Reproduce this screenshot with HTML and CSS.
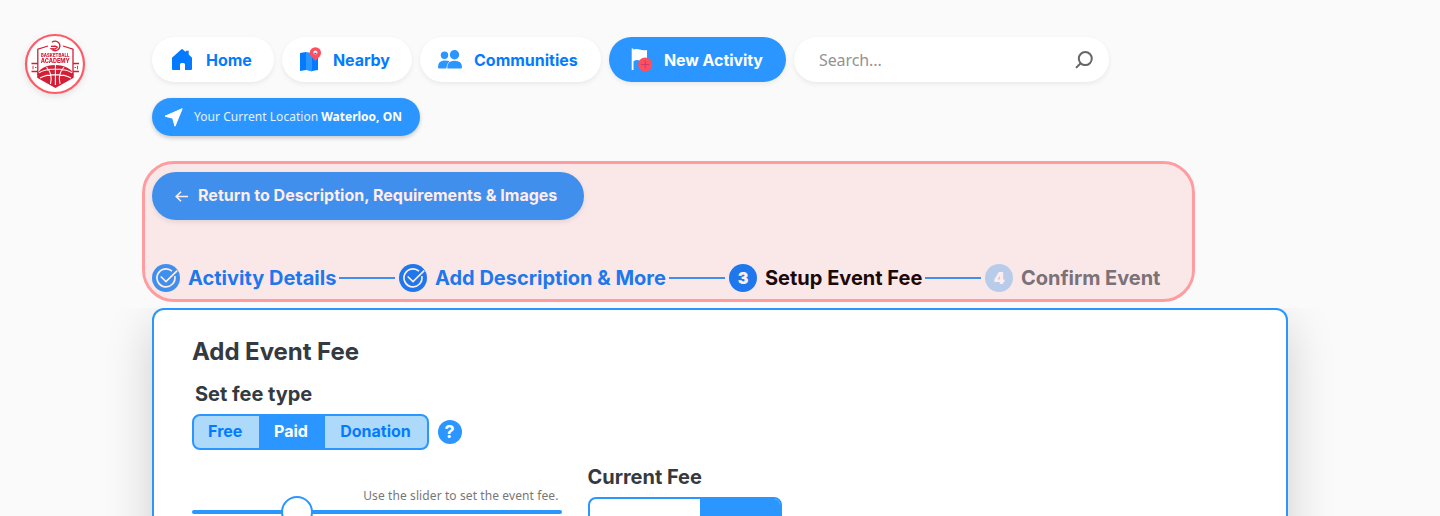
FILE: index.html
```html
<!DOCTYPE html>
<html lang="en">
<head>
<meta charset="utf-8">
<title>New Activity</title>
<link rel="stylesheet" href="styles.css">
</head>
<body>
<div class="page">
  <header class="header">
    <svg class="logo" viewBox="0 0 60 60">
      <circle cx="30" cy="30" r="29" fill="#fff" stroke="#ff5a66" stroke-width="2.2"/>
      <g fill="none" stroke="#d31f36" stroke-width="1.3">
        <path d="M23 12 12.800 15.200V41M38 12l10 3.200V41M6.500 29.500h6M48 29.500h6M6.500 37.500h6M48 37.500h6"/>
        <path d="M8 31.800v3.500M10 33.500h1.500M49.500 33.500h1.500M52.500 31.800v3.500" stroke-width=".9"/>
        <path d="M27 8.200a4.800 4.800 0 1 1-.8 6.500l4 .3 2-1.800-1.800-1-4.500.2" stroke-width="1.400"/>
      </g>
      <path fill="#d31f36" d="M12.200 41.500c1-6 8-10.500 18-10.500s17.500 4.500 18.500 10.500v2.300L30.400 54 12.200 43.800z"/>
      <path fill="none" stroke="#fff" stroke-width="1.100" d="M30.400 31v20M14 38.800c8-5 25-5 33 0M15 44c8-4.500 23-4.500 31 0M21.500 33c4.500 5 5.500 11 4 17M39 33c-4.500 5-5.500 11-4 17"/>
      <text class="logo-small" x="30.200" y="23.200" textLength="28.500" lengthAdjust="spacingAndGlyphs">BASKETBALL</text>
      <text class="logo-large" x="30.200" y="28.800" textLength="29" lengthAdjust="spacingAndGlyphs">ACADEMY</text>
    </svg>
    <div class="header-main">
      <nav class="nav">
        <a class="pill home"><svg class="icon" width="22" height="23" viewBox="0 0 22 23"><path fill="#047bff" d="M1 9.800 10.200 1.400a1.300 1.300 0 0 1 1.700 0l2.800 2.500V2.800h3v3.800L21 9.800V21q0 1-1 1h-6v-5.500q0-1.500-1.500-1.500h-2Q9 15 9 16.500V22H2q-1 0-1-1z"/></svg><span>Home</span></a>
        <a class="pill nearby"><svg class="icon" width="22" height="25" viewBox="0 0 22 25"><path fill="#047bff" d="M0 6l6-1v18l-6 1zM12 5l6 1v17l-6 1z"/><path fill="#2b96ff" d="M6 5l6 1v18.500L6 23z"/><path fill="#ff4e5e" d="M15.400.200a5.600 5.600 0 0 1 5.600 5.600c0 3.700-3.500 5.200-5.600 8.500-2.100-3.300-5.600-4.800-5.600-8.500A5.600 5.600 0 0 1 15.400.200z"/><circle cx="15.400" cy="5.600" r="2" fill="#fff"/><path fill="#047bff" d="M14 5.800h2.800a1.400 1.400 0 0 1-2.800 0z"/></svg><span>Nearby</span></a>
        <a class="pill communities"><svg class="icon" width="24" height="19" viewBox="0 0 24 19"><g fill="#2b96ff"><circle cx="6.500" cy="5.200" r="3.700"/><circle cx="16.500" cy="4.700" r="4.700"/><path d="M8.200 18.500q.2-4.500 3.300-7.500Q9.500 10.500 6.500 10.500 0 10.500 0 17q0 1.500 1.200 1.500z"/><path d="M9.300 18.500V17q0-6.200 7.300-6.200T24 17q0 1.500-1.300 1.500z"/></g></svg><span>Communities</span></a>
        <a class="pill activity"><svg class="icon" width="22" height="24" viewBox="0 0 22 24"><path fill="#fff" d="M.700.500h1.500v1q3-1.200 6.500 0t7.300.5v10.500q-3.500 1.500-7 0t-6.500.7V22H.700z"/><circle cx="14.200" cy="16.500" r="7" fill="#ff4e5e"/><path d="M14.200 12.500v8M10.200 16.500h8" stroke="#c83c70" stroke-width="1"/></svg><span>New Activity</span></a>
        <div class="search"><span>Search...</span><svg width="18" height="18" viewBox="0 0 18 18"><g fill="none" stroke="#666" stroke-width="2"><circle cx="10.300" cy="7.600" r="6.500"/><path d="M5.700 12.200 1 16.900"/></g></svg></div>
      </nav>
      <div class="location"><svg width="19" height="19" viewBox="0 0 19 19"><path fill="#fff" stroke="#fff" stroke-linejoin="round" d="M18.200.700 1 8.200l7.700 2 2.300 8z"/></svg><span class="location-label">Your Current Location</span><b>Waterloo, ON</b></div>
    </div>
  </header>

  <section class="progress">
    <a class="return"><svg width="13" height="11" viewBox="0 0 13 11"><path d="M6 .800 1.200 5.500 6 10.200M1.400 5.500H13" fill="none" stroke="#fff" stroke-width="1.600"/></svg><span>Return to Description, Requirements &amp; Images</span></a>
    <div class="steps">
      <div class="step one"><svg class="mark" viewBox="0 0 28 28"><circle cx="14" cy="14" r="14" fill="#2b96ff"/><g fill="none" stroke="#fff" stroke-width="1.700"><path d="M20 7.200a9 9 0 1 0 2.800 5"/><path d="M8.700 12.500l5.300 5L25.200 6.700"/></g></svg><span>Activity Details</span></div>
      <i class="line"></i>
      <div class="step two"><svg class="mark" viewBox="0 0 28 28"><circle cx="14" cy="14" r="14" fill="#047bff"/><g fill="none" stroke="#fff" stroke-width="1.700"><path d="M20 7.200a9 9 0 1 0 2.800 5"/><path d="M8.700 12.500l5.300 5L25.200 6.700"/></g></svg><span>Add Description &amp; More</span></div>
      <i class="line"></i>
      <div class="step three"><b class="mark">3</b><span>Setup Event Fee</span></div>
      <i class="line"></i>
      <div class="step four"><b class="mark">4</b><span>Confirm Event</span></div>
    </div>
  </section>

  <main class="stage">
    <div class="card">
      <h1>Add Event Fee</h1>
      <h2 class="type-title">Set fee type</h2>
      <div class="type-row">
        <div class="types"><span class="free">Free</span><span class="paid">Paid</span><span class="donation">Donation</span></div>
        <b class="help">?</b>
      </div>
      <div class="fee-row">
        <div class="slider"><p><span>Use the slider to set the event fee.</span></p><div class="track"><i class="thumb"></i></div></div>
        <div class="current"><h2>Current Fee</h2><div class="amount"><i></i></div></div>
      </div>
    </div>
  </main>
</div>
</body>
</html>
```
FILE: styles.css
```css
* { box-sizing: border-box; }
body { margin: 0; background: #fafafa; font-family: Inter, sans-serif; }
.page { width: 1440px; height: 516px; overflow: hidden; }
span, b, h1, h2, p { white-space: nowrap; }
svg { flex: none; display: block; }

.header { display: flex; height: 161px; padding: 34px 0 0 25px; }
.logo { width: 60px; height: 60px; margin-right: 67px; overflow: visible; filter: drop-shadow(0 2px 3px rgba(0,0,0,.1)); }
.logo text { fill: #d31f36; text-anchor: middle; font-weight: 800; }
.logo-small { font-size: 4.8px; }
.logo-large { font-size: 6.4px; }
.header-main { padding-top: 3px; }
.nav { display: flex; gap: 8px; }
.pill { display: flex; align-items: center; height: 45px; border-radius: 23px; background: #fff; box-shadow: 0 2px 5px rgba(0,0,0,.07); color: #047bff; font-size: 16px; font-weight: 700; }
.nearby span, .activity span { letter-spacing: -.08px; }
.home { width: 122px; padding-left: 19px; gap: 13px; }
.nearby { width: 130px; padding-left: 18px; gap: 11px; }
.communities { width: 181px; padding-left: 18px; gap: 12px; }
.activity { width: 177px; padding-left: 22px; gap: 11px; background: #2b96ff; color: #fff; }
.search { display: flex; align-items: center; justify-content: space-between; width: 315px; height: 45px; padding: 0 16px 0 25px; border-radius: 23px; background: #fff; box-shadow: 0 2px 5px rgba(0,0,0,.07); font: 16px "Noto Sans", sans-serif; letter-spacing: -.1px; color: #939393; }
.location { display: flex; align-items: center; width: 268px; height: 38px; margin-top: 16px; padding-left: 12px; border-radius: 19px; background: #2b96ff; box-shadow: 0 2px 4px rgba(0,0,0,.2); color: #fff; font: 12px "Noto Sans", sans-serif; }
.location span, .location b { margin-top: -1px; }
.location .location-label { margin-right: 3px; margin-left: 11px; color: #e4f1ff; letter-spacing: .04px; }

.progress { position: relative; width: 1053px; height: 141px; margin-left: 142px; padding: 11px 10px 0; }
.progress::after { content: ""; position: absolute; inset: 0; border: 3px solid #ff9ca0; border-radius: 32px; background: rgba(255,84,86,.105); background-clip: padding-box; }
.return { display: flex; align-items: center; gap: 9px; width: 432px; height: 48px; padding-left: 23px; border-radius: 24px; background: #2b96ff; box-shadow: 0 2px 5px rgba(0,0,0,.1); color: #fff; font-size: 16px; font-weight: 700; letter-spacing: .02px; }
.return span { margin: -2px 0 0 1px; }
.steps { display: flex; align-items: center; margin-top: 44px; height: 28px; font-size: 20px; font-weight: 700; }
.step { display: flex; align-items: center; gap: 8px; color: #047bff; }
.one { width: 187px; }
.two { width: 270px; }
.three { width: 196px; color: #000; }
.four { color: #6c757d; letter-spacing: -.03px; }
.mark { width: 28px; height: 28px; flex: none; }
b.mark { border-radius: 50%; background: #047bff; color: #fff; text-align: center; font-size: 16px; line-height: 28px; }
.four .mark { background: #b0dbfb; }
.line { width: 56px; height: 2px; margin-right: 4px; background: #2b96ff; }

.stage { height: 214px; padding: 6px 112px 0; clip-path: inset(6px 0 0 0); }
.card { width: 1136px; height: 700px; margin-left: 40px; padding: 27px 38px 0; border: 2px solid #2b96ff; border-radius: 12px; background: #fff; box-shadow: 0 16px 48px rgba(0,0,0,.175); color: #343a40; }
h1, h2, p { margin: 0; }
h1 { font-size: 24px; line-height: 30px; font-weight: 700; letter-spacing: -.05px; }
h2 { font-size: 20px; line-height: 26px; font-weight: 700; letter-spacing: -.02px; }
.type-title { margin: 14px 0 0 3px; }
.type-row { display: flex; align-items: center; gap: 9px; margin-top: 7px; }
.types { display: flex; width: 236.500px; height: 36px; border: 2px solid #2b96ff; border-radius: 8px; overflow: hidden; background: #add9fa; color: #047bff; font-size: 16px; line-height: 31px; font-weight: 700; text-align: center; }
.free { width: 64.500px; padding-right: 2px; }
.paid { width: 66px; padding-right: 1px; background: #2b96ff; color: #fff; }
.donation { flex: 1; }
.help { width: 24px; height: 24px; border-radius: 50%; background: #2b96ff; color: #fff; font-size: 18px; line-height: 24px; text-align: center; }
.fee-row { display: flex; gap: 26px; margin-top: 14px; }
.slider { width: 369.500px; padding-top: 23px; }
.slider p { height: 18px; padding-right: 3px; text-align: right; color: #777; font: 12px/18px "Noto Sans", sans-serif; letter-spacing: .1px; }
.track { display: flex; align-items: center; height: 4px; margin-top: 5px; padding-left: 89px; border-radius: 2px; background: #2b96ff; }
.thumb { flex: none; width: 32px; height: 32px; border: 2px solid #2b96ff; border-radius: 50%; background: #fff; }
.amount { display: flex; justify-content: flex-end; width: 194.500px; height: 40px; margin-top: 7px; border: 2px solid #2b96ff; border-radius: 8px; overflow: hidden; }
.amount i { width: 80px; background: #2b96ff; }
```
